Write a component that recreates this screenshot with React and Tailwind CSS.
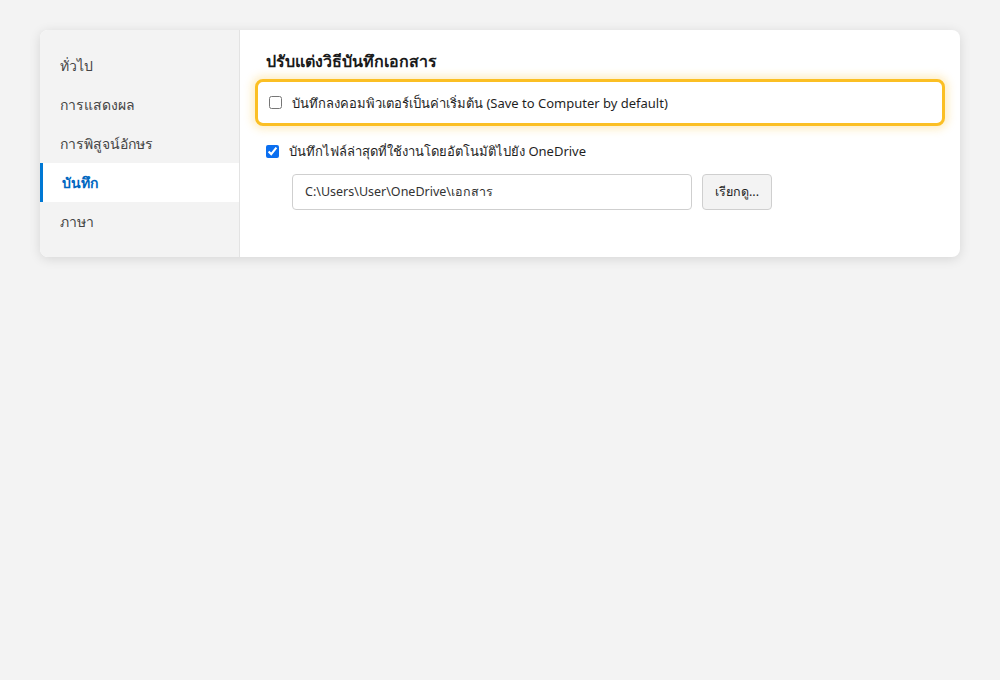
import React, { useState } from 'react';

const navItems = ['ทั่วไป', 'การแสดงผล', 'การพิสูจน์อักษร', 'บันทึก', 'ภาษา'];

export default function App() {
  const [active, setActive] = useState('บันทึก');
  const [saveLocal, setSaveLocal] = useState(false);
  const [autoSave, setAutoSave] = useState(true);

  return (
    <div className="min-h-[680px] bg-[#f3f3f3] px-10 pt-[30px] font-['Noto_Sans',sans-serif] text-[#1f1f1f]">
      <div className="flex overflow-hidden rounded-lg bg-white shadow-[0_2px_12px_rgba(0,0,0,0.12)]">
        <nav className="w-[200px] shrink-0 border-r border-[#e3e3e3] bg-[#f3f3f3] pt-4 pb-4">
          {navItems.map((item) => {
            const on = item === active;
            return (
              <button
                key={item}
                type="button"
                onClick={() => setActive(item)}
                className={
                  on
                    ? 'flex h-[39px] w-full items-center border-l-[3px] border-[#0078d4] bg-white pl-[19px] text-left text-[14px] font-semibold text-[#0067c0]'
                    : 'flex h-[39px] w-full items-center pl-5 text-left text-[14px] text-[#444]'
                }
              >
                {item}
              </button>
            );
          })}
        </nav>

        <section className="flex-1 pb-[47px] pl-[15px] pr-[15px] pt-[20px]">
          <h1 className="pl-[11px] text-[16px] font-bold leading-[22px] text-[#1a1a1a]">ปรับแต่งวิธีบันทึกเอกสาร</h1>

          <label className="mt-[7px] flex h-[47px] items-center gap-[10px] rounded-lg border-[3px] border-[#fbbf24] bg-white pl-[11px] shadow-[0_0_8px_3px_rgba(251,191,36,0.28)]">
            <input
              type="checkbox"
              checked={saveLocal}
              onChange={(e) => setSaveLocal(e.target.checked)}
              className="h-[13px] w-[13px] accent-[#0b6ff0]"
            />
            <span className="text-[13px] leading-5">บันทึกลงคอมพิวเตอร์เป็นค่าเริ่มต้น (Save to Computer by default)</span>
          </label>

          <label className="mt-[15px] flex items-center gap-[10px] pl-[11px]">
            <input
              type="checkbox"
              checked={autoSave}
              onChange={(e) => setAutoSave(e.target.checked)}
              className="h-[13px] w-[13px] accent-[#0b6ff0]"
            />
            <span className="text-[13px] leading-5">บันทึกไฟล์ล่าสุดที่ใช้งานโดยอัตโนมัติไปยัง OneDrive</span>
          </label>

          <div className="mt-[13px] flex items-center gap-[10px] pl-[37px]">
            <input
              type="text"
              defaultValue="C:\Users\User\OneDrive\เอกสาร"
              className="h-9 w-[400px] rounded border border-[#cfcfcf] px-3 text-[12.5px] text-[#333] outline-none"
            />
            <button
              type="button"
              className="h-9 w-[70px] rounded border border-[#cfcfcf] bg-[#f3f3f3] text-[12.5px] text-[#222]"
            >
              เรียกดู...
            </button>
          </div>
        </section>
      </div>
    </div>
  );
}
